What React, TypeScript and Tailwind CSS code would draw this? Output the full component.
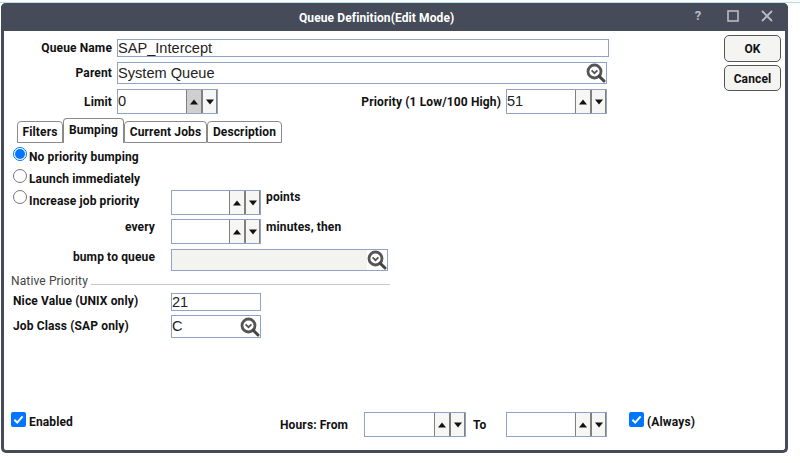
const FONT = "font-['Roboto','Liberation_Sans',sans-serif]";

function Magnifier({ size = 20 }: { size?: number }) {
  return (
    <svg width={size} height={size} viewBox="0 0 20 20" className="shrink-0">
      <circle cx="8.5" cy="8.5" r="6.5" fill="#fff" stroke="#555" strokeWidth="2.8" />
      <path d="M5.6 7.4 8.5 10.2 11.4 7.4" fill="none" stroke="#555" strokeWidth="1.8" />
      <path d="M13.2 13.2 18 18" stroke="#444" strokeWidth="3" strokeLinecap="round" />
    </svg>
  );
}

function Arrow({ up }: { up?: boolean }) {
  return (
    <svg width="8" height="6" viewBox="0 0 8 6">
      <path d={up ? "M4 0.5 8 5.5 0 5.5Z" : "M0 0.5 8 0.5 4 5.5Z"} fill="#111" />
    </svg>
  );
}

function Spinner({
  value = "",
  width = "w-[90px]",
  height = "h-[25px]",
  active = false,
}: {
  value?: string;
  width?: string;
  height?: string;
  active?: boolean;
}) {
  return (
    <div className={`flex ${width} ${height} shrink-0 border border-[#8fa3c4] bg-white`}>
      <div className="flex-1 min-w-0 pt-[1px] font-['Liberation_Sans',sans-serif] text-[14.6px] font-normal leading-[21px] tracking-normal text-[#222]">
        {value}
      </div>
      <div
        className={`flex w-[17px] items-center justify-center border-l border-r-2 border-[#808080] ${
          active ? "bg-[#cfcfcf]" : "bg-[#f6f6f4]"
        }`}
      >
        <Arrow up />
      </div>
      <div className="flex w-[14px] items-center justify-center border-r border-[#808080] bg-[#f6f6f4]">
        <Arrow />
      </div>
    </div>
  );
}

function TextBox({
  value,
  className,
  icon,
  disabled,
}: {
  value?: string;
  className: string;
  icon?: boolean;
  disabled?: boolean;
}) {
  return (
    <div className={`flex items-center border border-[#8fa3c4] ${className} bg-white`}>
      <div
        className={`flex h-full flex-1 min-w-0 items-center overflow-hidden font-['Liberation_Sans',sans-serif] text-[14.6px] font-normal leading-[15px] tracking-normal text-[#222] ${
          disabled ? "bg-[#f3f3ef]" : ""
        }`}
      >
        {value}
      </div>
      {icon && <Magnifier />}
    </div>
  );
}

function Radio({ checked }: { checked?: boolean }) {
  return (
    <span
      className={`flex h-[14px] w-[14px] shrink-0 items-center justify-center rounded-full border ${
        checked ? "border-[#0075ff]" : "border-[#767676]"
      } bg-white`}
    >
      {checked && <span className="h-[10px] w-[10px] rounded-full bg-[#0075ff]" />}
    </span>
  );
}

function Check() {
  return (
    <span className="flex h-[15px] w-[15px] shrink-0 items-center justify-center rounded-[2px] bg-[#0075ff]">
      <svg width="13" height="13" viewBox="0 0 13 13">
        <path d="M2.4 6.8 5.2 9.6 10.6 3.4" fill="none" stroke="#fff" strokeWidth="2" />
      </svg>
    </span>
  );
}

function Tab({ label, active, width }: { label: string; active?: boolean; width: string }) {
  return (
    <div
      className={`${width} flex items-center justify-center rounded-t-[4px] border border-[#8a8a8a] ${
        active ? "h-[25px] border-b-0 bg-white pb-[3px]" : "h-[22px] bg-white"
      }`}
    >
      {label}
    </div>
  );
}

export default function App() {
  return (
    <div className={`${FONT} h-[463px] w-[800px] overflow-hidden bg-white text-[12px] font-bold tracking-[0.13px] text-[#111]`}>
      <div className="h-[3px] border-b border-[#b7e0ee] bg-[#fbfbfb]" />
      <div className="ml-[1px] flex h-[450px] w-[787px] flex-col rounded-[5px] border-x-[3px] border-b-[3px] border-[#454b58] bg-white">
        <div className="-mx-[3px] flex h-[28px] shrink-0 items-center rounded-t-[5px] bg-[#454b58] text-white">
          <div className="w-[298px] shrink-0" />
          <div className="mt-[2px] w-[392px] shrink-0 tracking-[0.1px]">Queue Definition(Edit Mode)</div>
          <div className="flex w-[14px] -translate-y-[1px] justify-center text-[13px] text-[#b9bcc3]">?</div>
          <svg width="12" height="12" viewBox="0 0 12 12" className="ml-[22px] -translate-y-[1px]">
            <rect x="1" y="1" width="10" height="10" fill="none" stroke="#b9bcc3" strokeWidth="1.6" />
          </svg>
          <svg width="12" height="12" viewBox="0 0 12 12" className="ml-[22px] -translate-y-[1px]">
            <path d="M1 1 11 11M11 1 1 11" stroke="#b9bcc3" strokeWidth="1.8" />
          </svg>
        </div>

        <div className="flex min-h-0 flex-1">
          <div className="flex w-[720px] shrink-0 flex-col">
            {/* Header fields */}
            <div className="mt-[8px] flex h-[18px] items-center">
              <div className="w-[108px] text-right">Queue Name</div>
              <TextBox value="SAP_Intercept" className="ml-[5px] h-[18px] w-[492px]" />
            </div>
            <div className="mt-[5px] flex h-[22px] items-center">
              <div className="w-[108px] text-right">Parent</div>
              <TextBox value="System Queue" icon className="ml-[5px] h-[22px] w-[490px]" />
            </div>
            <div className="mt-[5px] flex h-[25px] items-center">
              <div className="w-[108px] text-right">Limit</div>
              <div className="ml-[5px]">
                <Spinner value="0" width="w-[101px]" active />
              </div>
              <div className="w-[283px] text-right">Priority (1 Low/100 High)</div>
              <div className="ml-[5px]">
                <Spinner value="51" width="w-[101px]" />
              </div>
            </div>

            {/* Tabs */}
            <div className="mt-[4px] ml-[13px] flex h-[25px] items-end">
              <Tab label="Filters" width="w-[46px]" />
              <Tab label="Bumping" width="w-[61px]" active />
              <Tab label="Current Jobs" width="w-[83px]" />
              <Tab label="Description" width="w-[75px]" />
            </div>

            {/* Bumping tab */}
            <div className="mt-[4px] ml-[9px] flex h-[14px] items-center gap-[2px]">
              <Radio checked />
              <span className="translate-y-[3px]">No priority bumping</span>
            </div>
            <div className="mt-[8px] ml-[9px] flex h-[14px] items-center gap-[2px]">
              <Radio />
              <span className="translate-y-[3px]">Launch immediately</span>
            </div>
            <div className="mt-[7px] flex h-[25px]">
              <div className="ml-[9px] flex h-[14px] w-[158px] shrink-0 items-center gap-[2px]">
                <Radio />
                <span className="translate-y-[4px]">Increase job priority</span>
              </div>
              <Spinner />
              <span className="ml-[5px] leading-[14px]">points</span>
            </div>
            <div className="mt-[4px] flex h-[25px]">
              <div className="w-[151px] shrink-0 text-right leading-[16px]">every</div>
              <div className="ml-[16px]">
                <Spinner />
              </div>
              <span className="ml-[5px] leading-[16px]">minutes, then</span>
            </div>
            <div className="mt-[5px] flex h-[22px]">
              <div className="w-[151px] shrink-0 text-right leading-[16px]">bump to queue</div>
              <TextBox icon disabled className="ml-[16px] h-[22px] w-[217px]" />
            </div>

            <div className="mt-[4px] ml-[7px] flex h-[16px] w-[379px] items-center font-normal text-[#444]">
              <span className="shrink-0 -translate-y-[2px]">Native Priority</span>
              <span className="ml-[3px] h-[1px] flex-1 translate-y-[1px] bg-[#c8c8c8]" />
            </div>

            <div className="mt-[2px] flex h-[18px] items-center">
              <div className="ml-[9px] w-[158px] shrink-0 -translate-y-[1px]">Nice Value (UNIX only)</div>
              <TextBox value="21" className="h-[18px] w-[90px]" />
            </div>
            <div className="mt-[4px] flex h-[23px] items-center">
              <div className="ml-[9px] w-[158px] shrink-0 -translate-y-[1px]">Job Class (SAP only)</div>
              <TextBox value="C" icon className="h-[23px] w-[90px]" />
            </div>

            {/* Footer */}
            <div className="mt-[74px] flex h-[25px]">
              <div className="ml-[7px] flex w-[269px] shrink-0 items-start">
                <Check />
                <span className="ml-[3px] leading-[20px]">Enabled</span>
              </div>
              <div className="w-[68px] shrink-0 self-center whitespace-nowrap">Hours: From</div>
              <div className="ml-[16px]">
                <Spinner width="w-[102px]" />
              </div>
              <div className="ml-[7px] w-[33px] shrink-0 self-center">To</div>
              <Spinner width="w-[101px]" />
              <div className="ml-[22px] flex items-start">
                <Check />
                <span className="ml-[3px] leading-[20px]">(Always)</span>
              </div>
            </div>
          </div>

          <div className="flex w-[57px] shrink-0 flex-col">
            <button className="mt-[4px] h-[27px] w-[57px] rounded-[5px] border border-[#555] bg-[#f4f4f2] text-[12px] font-bold">
              OK
            </button>
            <button className="mt-[3px] h-[26px] w-[57px] rounded-[5px] border border-[#555] bg-[#f4f4f2] pt-[1px] text-[12px] font-bold">
              Cancel
            </button>
          </div>
        </div>
      </div>
    </div>
  );
}
